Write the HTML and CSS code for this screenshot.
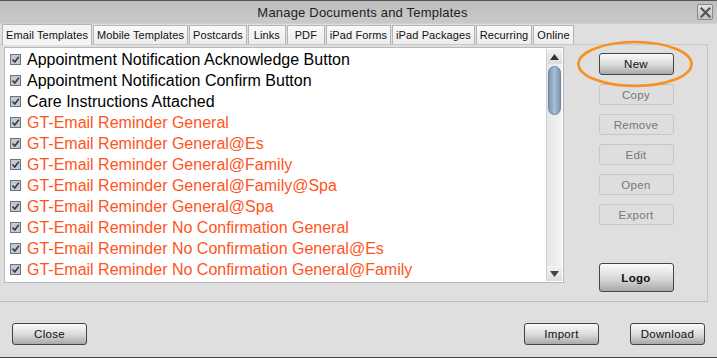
FILE: index.html
```html
<!DOCTYPE html>
<html>
<head>
<meta charset="utf-8">
<link rel="stylesheet" href="styles.css">
</head>
<body>
<div class="window">
  <div class="titlebar">
    <span class="title">Manage Documents and Templates</span>
    <span class="closebox"><svg width="11" height="11" viewBox="0 0 11 11"><path d="M1.5 1.5 L9.5 9.5 M9.5 1.5 L1.5 9.5" stroke="#555" stroke-width="2.2" stroke-linecap="square"/></svg></span>
  </div>
  <div class="tabs">
    <span class="tab active">Email Templates</span>
    <span class="tab">Mobile Templates</span>
    <span class="tab">Postcards</span>
    <span class="tab">Links</span>
    <span class="tab">PDF</span>
    <span class="tab">iPad Forms</span>
    <span class="tab">iPad Packages</span>
    <span class="tab">Recurring</span>
    <span class="tab">Online</span>
  </div>
  <div class="main">
    <div class="listbox">
      <ul class="items">
        <li class="item"><span class="check"></span>Appointment Notification Acknowledge Button</li>
        <li class="item"><span class="check"></span>Appointment Notification Confirm Button</li>
        <li class="item"><span class="check"></span>Care Instructions Attached</li>
        <li class="item gt"><span class="check"></span>GT-Email Reminder General</li>
        <li class="item gt"><span class="check"></span>GT-Email Reminder General@Es</li>
        <li class="item gt"><span class="check"></span>GT-Email Reminder General@Family</li>
        <li class="item gt"><span class="check"></span>GT-Email Reminder General@Family@Spa</li>
        <li class="item gt"><span class="check"></span>GT-Email Reminder General@Spa</li>
        <li class="item gt"><span class="check"></span>GT-Email Reminder No Confirmation General</li>
        <li class="item gt"><span class="check"></span>GT-Email Reminder No Confirmation General@Es</li>
        <li class="item gt"><span class="check"></span>GT-Email Reminder No Confirmation General@Family</li>
      </ul>
      <div class="scrollbar">
        <div class="arrow"><svg width="9" height="6" viewBox="0 0 9 6"><path d="M4.5 0 L9 6 L0 6Z" fill="#333"/></svg></div>
        <div class="track"><div class="thumb"></div></div>
        <div class="arrow"><svg width="9" height="6" viewBox="0 0 9 6"><path d="M0 0 L9 0 L4.5 6Z" fill="#444"/></svg></div>
      </div>
    </div>
    <div class="side">
      <div class="newwrap">
        <button class="btn">New</button>
        <svg class="ring" width="118" height="50" viewBox="0 0 118 50"><ellipse cx="59" cy="25" rx="56.5" ry="22" fill="none" stroke="#f7901e" stroke-width="2.6"/></svg>
      </div>
      <button class="btn off">Copy</button>
      <button class="btn off">Remove</button>
      <button class="btn off">Edit</button>
      <button class="btn off">Open</button>
      <button class="btn off">Export</button>
      <button class="btn logo">Logo</button>
    </div>
  </div>
  <div class="footer">
    <button class="btn">Close</button>
    <span class="spacer"></span>
    <button class="btn">Import</button>
    <button class="btn">Download</button>
  </div>
</div>
</body>
</html>
```
FILE: styles.css
```css
* { box-sizing: border-box; }
html, body { margin: 0; padding: 0; }
body { background: #dfdfdf; }
.window {
  width: 717px; height: 358px;
  background: #dfdfdf;
  border-top: 1px solid #555;
  border-bottom: 1px solid #444;
  display: flex; flex-direction: column;
  font-family: "Liberation Sans", Arial, sans-serif;
}
.titlebar {
  height: 22px; flex: none;
  background: linear-gradient(#bdbdbd, #c9c9c9);
  display: flex; align-items: center; justify-content: center;
  position: relative;
}
.title { font-size: 13px; color: #222; letter-spacing: 0.2px; padding-left: 8px; }
.closebox {
  position: absolute; right: 4px; top: 3px;
  width: 16px; height: 16px;
  border: 1px solid #8a8a8a; border-radius: 2px;
  background: linear-gradient(#e4e4e4, #c4c4c4);
  display: flex; align-items: center; justify-content: center;
}
.tabs {
  height: 21px; flex: none; display: flex; align-items: flex-end;
  padding-left: 2px; gap: 1px;
  background: #dfdfdf;
  border-top: 1px solid #cfcfcf;
}
.tab {
  height: 19px; padding: 0 3px; min-width: 38px;
  font-size: 11px; color: #111;
  border: 1px solid #b5b5b5; border-bottom: none;
  background: linear-gradient(#fafafa, #ececec);
  display: flex; align-items: center; justify-content: center;
  letter-spacing: 0.1px;
}
.tab.active { height: 21px; background: #f4f4f4; padding: 0 3px; margin-bottom: -1px; position: relative; }
.main {
  height: 258px; flex: none;
  display: flex;
  border-top: 1px solid #c8c8c8;
  border-right: 1px solid #c4c4c4;
  border-bottom: 1px solid #bdbdbd;
  width: 708px;
}
.listbox {
  margin: 2px 0 0 4px;
  width: 560px; height: 236px;
  background: #fff;
  border: 1px solid #b8b8b8;
  display: flex;
}
.items { list-style: none; margin: 0; padding: 1px 0 0 5px; flex: 1; overflow: hidden; }
.item {
  height: 21px; display: flex; align-items: center;
  font-size: 16px; color: #000; white-space: nowrap;
}
.item.gt { color: #ff5421; }
.check {
  width: 11px; height: 11px; margin-right: 6px; flex: none;
  border: 1px solid #6b7380;
  background: #c3c9d3 no-repeat center/9px 9px;
  background-image: url("data:image/svg+xml,%3Csvg xmlns='http://www.w3.org/2000/svg' viewBox='0 0 9 9'%3E%3Cpath d='M1.5 4.5 L3.8 7 L7.8 1.8' fill='none' stroke='%23333a45' stroke-width='1.6'/%3E%3C/svg%3E");
}
.scrollbar {
  width: 16px; margin: 1px 1px 1px 0;
  display: flex; flex-direction: column;
  background: linear-gradient(90deg, #e6e6e6, #f4f4f4);
  border-left: 1px solid #d0d0d0;
}
.arrow {
  height: 15px; display: flex; align-items: center; justify-content: center;
  background: linear-gradient(#f2f2f2, #dcdcdc);
}
.track { flex: 1; padding: 2px 1px; }
.thumb {
  height: 49px; border-radius: 7px;
  background: linear-gradient(90deg, #7f97b2, #a9bdd3 50%, #7f97b2);
  border: 1px solid #6e86a2;
}
.side {
  flex: 1;
  display: flex; flex-direction: column; align-items: center;
  padding-top: 8px; padding-left: 1px;
}
.btn {
  width: 75px; height: 22px;
  font-family: "Liberation Sans", Arial, sans-serif;
  font-size: 11.5px; color: #111;
  border: 1px solid #444; border-radius: 3px;
  background: linear-gradient(#fbfbfb, #d8d8d8 55%, #a8a8a8);
  padding: 0;
  letter-spacing: 0.3px;
}
.newwrap { position: relative; }
.ring { position: absolute; left: -23px; top: -14px; pointer-events: none; }
.btn.off {
  margin-top: 9px; height: 21px;
  color: #777; background: #dedede;
  border: 1px solid #c6c6c6;
}
.btn.logo { margin-top: 38px; height: 29px; font-weight: bold; }
.footer {
  flex: 1; display: flex; align-items: center;
  padding: 8px 12px 0 12px;
}
.spacer { flex: 1; }
.footer .btn { margin-left: 31px; }
.footer .btn:first-child { margin-left: 0; }
```
